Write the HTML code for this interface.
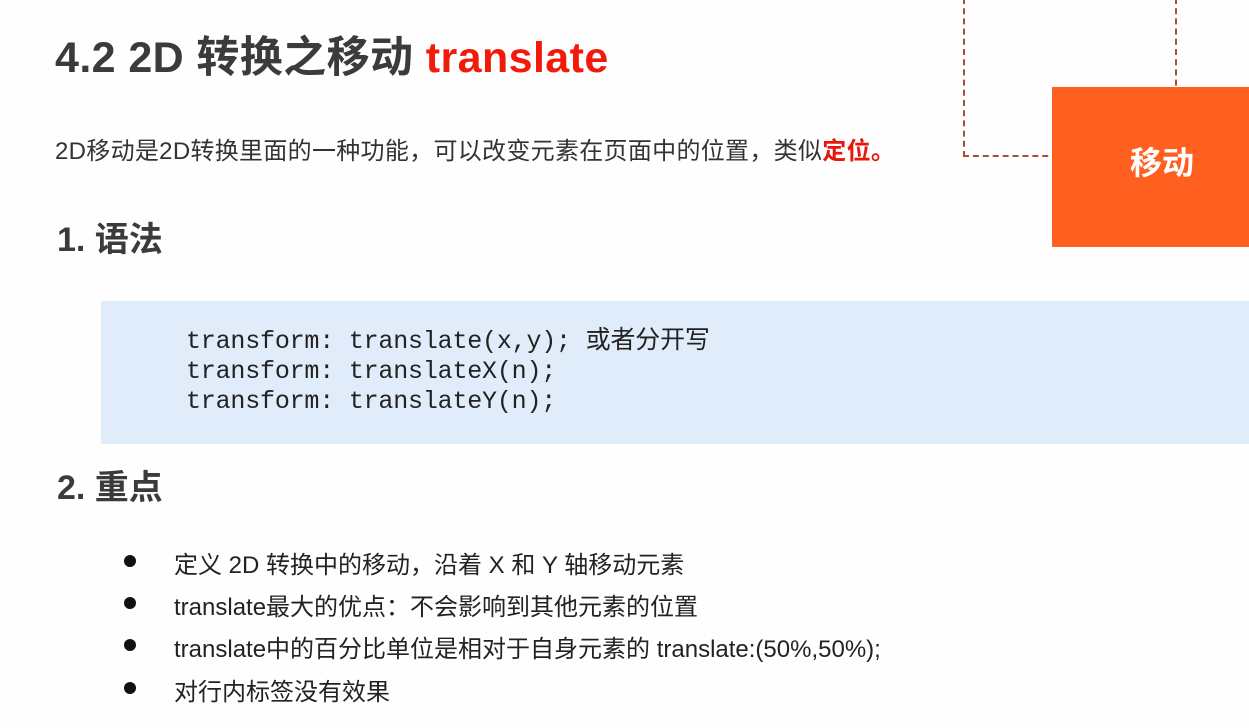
<!DOCTYPE html>
<html><head><meta charset="utf-8"><style>
*{margin:0;padding:0}
body{width:1249px;height:728px;background:#fefefe;position:relative;overflow:hidden;font-family:"Liberation Sans","Microsoft YaHei","Noto Sans CJK SC",sans-serif;color:#333}
.a{position:absolute;white-space:nowrap}
h1{position:absolute;left:55px;top:23px;font-size:43px;font-weight:bold;color:#3b3b3b;white-space:nowrap;letter-spacing:0.4px}
h1 span{color:#f21a0a}
.p{left:55px;top:131px;font-size:24px;color:#333;letter-spacing:0.3px}
.p b{color:#e8160a}
.h2{left:57px;font-size:34px;font-weight:bold;color:#3b3b3b}
.code{position:absolute;left:101px;top:301px;width:1148px;height:143px;background:#e1ecfa}
.code pre{position:absolute;left:85px;top:26px;font-family:"Liberation Mono","Noto Sans CJK SC",monospace;font-size:25px;line-height:30px;color:#222;letter-spacing:-0.2px}
.li{left:174px;font-size:24px;color:#222}
.dot{position:absolute;left:124px;width:12px;height:12px;border-radius:50%;background:#111}
</style></head><body>
<div class="a" style="left:963px;top:-2px;width:210px;height:157px;border:2px dashed #a0523a;border-top:none"></div>
<div class="a" style="left:1052px;top:87px;width:197px;height:160px;background:#ff5f1f;color:#fff;font-size:32px;font-weight:bold;line-height:152px"><span style="position:absolute;left:78px">移动</span></div>
<h1>4.2 2D 转换之移动 <span>translate</span></h1>
<div class="a p">2D移动是2D转换里面的一种功能，可以改变元素在页面中的位置，类似<b>定位。</b></div>
<div class="a h2" style="top:212px">1. 语法</div>
<div class="code"><pre>transform: translate(x,y); 或者分开写
transform: translateX(n);
transform: translateY(n);</pre></div>
<div class="a h2" style="top:460px">2. 重点</div>
<div class="dot" style="top:555px"></div><div class="a li" style="top:545px">定义 2D 转换中的移动，沿着 X 和 Y 轴移动元素</div>
<div class="dot" style="top:597px"></div><div class="a li" style="top:587px">translate最大的优点：不会影响到其他元素的位置</div>
<div class="dot" style="top:639px"></div><div class="a li" style="top:629px">translate中的百分比单位是相对于自身元素的 translate:(50%,50%);</div>
<div class="dot" style="top:682px"></div><div class="a li" style="top:672px">对行内标签没有效果</div>
</body></html>
